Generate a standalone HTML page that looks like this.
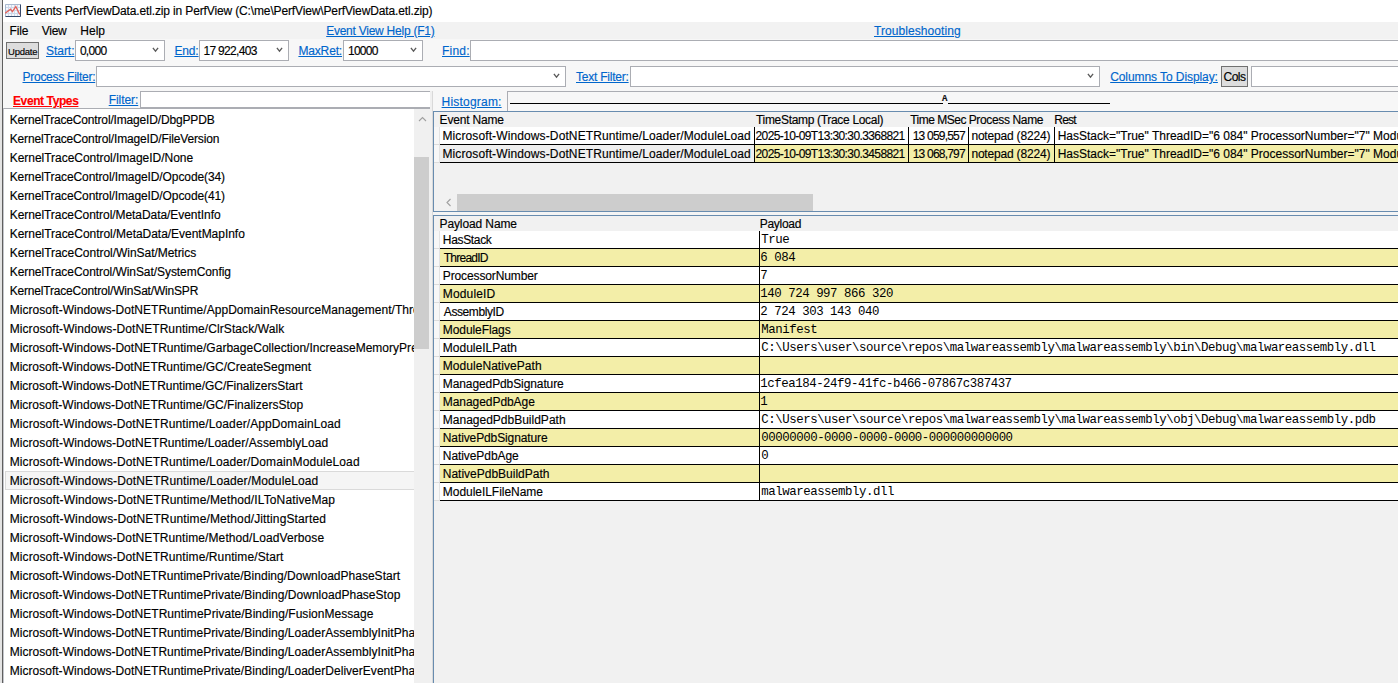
<!DOCTYPE html>
<html><head><meta charset="utf-8"><style>
html,body{margin:0;padding:0;}
body{width:1398px;height:683px;position:relative;overflow:hidden;background:#f7f7f7;font-family:'Liberation Sans', sans-serif;}
.t{position:absolute;white-space:nowrap;-webkit-text-stroke:0.15px currentColor;}
.r{position:absolute;box-sizing:border-box;}
</style></head><body>
<!-- window left edge -->
<div class="r" style="left:0;top:0;width:2px;height:683px;background:#e4e4e4"></div>
<div class="r" style="left:2px;top:0;width:1px;height:683px;background:#5f5f5f"></div>
<!-- title bar -->
<div class="r" style="left:3px;top:0;width:1395px;height:22px;background:#ffffff"></div>
<!-- icon -->
<svg class="r" style="left:5px;top:4px" width="16" height="13" viewBox="0 0 16 13">
 <rect x="0" y="0" width="16" height="13" fill="#f4f7fc"/>
 <g stroke="#cdd8ea" stroke-width="1"><line x1="1" y1="3.5" x2="15" y2="3.5"/><line x1="1" y1="6.5" x2="15" y2="6.5"/><line x1="1" y1="9.5" x2="15" y2="9.5"/><line x1="3.5" y1="1" x2="3.5" y2="12"/><line x1="6.5" y1="1" x2="6.5" y2="12"/><line x1="9.5" y1="1" x2="9.5" y2="12"/><line x1="12.5" y1="1" x2="12.5" y2="12"/></g>
 <path d="M0.5 0.5 H15.5" stroke="#a9b9cf" stroke-width="1"/>
 <path d="M0.5 0.5 V12.5" stroke="#a9b9cf" stroke-width="1"/>
 <path d="M15.5 0.5 V12.5 H0.5" fill="none" stroke="#34486a" stroke-width="1"/>
 <polyline points="0.2,9.2 5.5,5.2 7.4,7.6 10.8,2.6 14.8,10.5" fill="none" stroke="#e2625a" stroke-width="1.3"/>
</svg>
<!-- menu bar -->
<div class="r" style="left:3px;top:22px;width:1395px;height:17px;background:#f2f2f2"></div>
<!-- update button -->
<div class="r" style="left:6px;top:42px;width:33px;height:17px;background:#dddddd;border:1px solid #707070"></div>
<!-- combos row 2 -->
<div class="r" style="left:75px;top:40px;width:90px;height:21px;background:#fff;border:1px solid #abadb3"></div>
<div class="r" style="left:199px;top:40px;width:90px;height:21px;background:#fff;border:1px solid #abadb3"></div>
<div class="r" style="left:343px;top:40px;width:80px;height:21px;background:#fff;border:1px solid #abadb3"></div>
<div class="r" style="left:470px;top:40px;width:940px;height:21px;background:#fff;border:1px solid #abadb3"></div>
<!-- row 3 -->
<div class="r" style="left:96px;top:66px;width:470px;height:21px;background:#fff;border:1px solid #abadb3"></div>
<div class="r" style="left:630px;top:66px;width:470px;height:21px;background:#fff;border:1px solid #abadb3"></div>
<div class="r" style="left:1221px;top:66px;width:27px;height:21px;background:#dddddd;border:1px solid #707070"></div>
<div class="r" style="left:1251px;top:66px;width:160px;height:21px;background:#fff;border:1px solid #abadb3"></div>
<!-- chevrons -->
<svg class="r" style="left:0;top:0" width="1398" height="100">
 <g fill="none" stroke="#5a5a5a" stroke-width="1.3">
  <polyline points="152.9,47.8 155.5,51.2 158.1,47.8"/>
  <polyline points="276.9,47.8 279.5,51.2 282.1,47.8"/>
  <polyline points="410.9,47.8 413.5,51.2 416.1,47.8"/>
  <polyline points="553.9,73.8 556.5,77.2 559.1,73.8"/>
  <polyline points="1087.9,73.8 1090.5,77.2 1093.1,73.8"/>
 </g>
</svg>
<!-- row 4: filter textbox -->
<div class="r" style="left:140px;top:91px;width:290px;height:17px;background:#fff;border:1px solid #abadb3;border-bottom:none;border-right:none"></div>
<!-- histogram box -->
<div class="r" style="left:507px;top:91px;width:900px;height:20px;background:#f7f7f7;border:1px solid #abadb3;border-bottom:none"></div>
<div class="r" style="left:510px;top:103px;width:433px;height:1px;background:#000"></div>
<div class="r" style="left:948px;top:103px;width:162px;height:1px;background:#000"></div>
<div class="t" style="left:942px;top:95px;font:bold 9px 'Liberation Mono',monospace;line-height:9px;color:#111">A</div>
<!-- left list -->
<div class="r" style="left:3px;top:108px;width:427px;height:575px;background:#fff;border-top:1px solid #abadb3;border-left:1px solid #c4c6cc"></div>
<div class="r" style="left:140px;top:107px;width:290px;height:1px;background:#abadb3"></div>
<div class="r" style="left:414px;top:109px;width:16px;height:574px;background:#f0f0f0"></div>
<div class="r" style="left:414px;top:157px;width:15px;height:192px;background:#cdcdcd"></div>
<svg class="r" style="left:414px;top:112px" width="16" height="14"><polyline points="5,9 8.5,5.5 12,9" fill="none" stroke="#a0a0a0" stroke-width="1.1"/></svg>
<div class="r" style="left:5px;top:471px;width:409px;height:19px;background:#f5f5f5;border:1px solid #dadada;border-left:1px solid #dadada;border-right:none"></div>
<!-- splitter -->
<div class="r" style="left:430px;top:91px;width:3px;height:592px;background:#f0f0f0"></div>
<div class="r" style="left:432px;top:91px;width:1px;height:592px;background:#d9d9d9"></div>
<!-- right panel: events grid -->
<div class="r" style="left:433px;top:111px;width:965px;height:101px;background:#f1f1f1;border:1px solid #688caf;border-right:none"></div>
<div class="r" style="left:434px;top:127px;width:6px;height:36px;background:#f7f7f7;border-right:1px solid #e3e3e3"></div>
<div class="r" style="left:434px;top:144px;width:6px;height:1px;background:#dcdcdc"></div>
<div class="r" style="left:434px;top:162px;width:6px;height:1px;background:#dcdcdc"></div>
<div class="r" style="left:440px;top:127px;width:958px;height:17px;background:#ffffff"></div>
<div class="r" style="left:440px;top:145px;width:958px;height:17px;background:#f3eea8"></div>
<div class="r" style="left:440px;top:145px;width:314px;height:17px;background:#efefef"></div>
<div class="r" style="left:440px;top:144px;width:958px;height:1px;background:#000"></div>
<div class="r" style="left:440px;top:162px;width:958px;height:1px;background:#000"></div>
<div class="r" style="left:754px;top:127px;width:1px;height:35px;background:#000"></div>
<div class="r" style="left:908px;top:127px;width:1px;height:35px;background:#000"></div>
<div class="r" style="left:968px;top:127px;width:1px;height:35px;background:#000"></div>
<div class="r" style="left:1054px;top:127px;width:1px;height:35px;background:#000"></div>
<!-- h scrollbar -->
<div class="r" style="left:457px;top:194px;width:356px;height:17px;background:#cdcdcd"></div>
<svg class="r" style="left:440px;top:194px" width="17" height="17"><polyline points="10.5,5 7,8.5 10.5,12" fill="none" stroke="#a0a0a0" stroke-width="1.1"/></svg>
<div class="r" style="left:433px;top:212px;width:965px;height:3px;background:#f4f4f4"></div>
<!-- payload grid -->
<div class="r" style="left:433px;top:215px;width:965px;height:468px;background:#f1f1f1;border-top:1px solid #688caf;border-left:1px solid #688caf"></div>
<div class="r" style="left:434px;top:231px;width:6px;height:270px;background:#f7f7f7;border-right:1px solid #e3e3e3"></div>
<div class="r" style="left:440px;top:231px;width:958px;height:17px;background:#ffffff"></div>
<div class="r" style="left:440px;top:248px;width:958px;height:1px;background:#000"></div>
<div class="r" style="left:434px;top:248px;width:6px;height:1px;background:#dcdcdc"></div>
<div class="r" style="left:440px;top:249px;width:958px;height:17px;background:#f3eea8"></div>
<div class="r" style="left:440px;top:266px;width:958px;height:1px;background:#000"></div>
<div class="r" style="left:434px;top:266px;width:6px;height:1px;background:#dcdcdc"></div>
<div class="r" style="left:440px;top:267px;width:958px;height:17px;background:#ffffff"></div>
<div class="r" style="left:440px;top:284px;width:958px;height:1px;background:#000"></div>
<div class="r" style="left:434px;top:284px;width:6px;height:1px;background:#dcdcdc"></div>
<div class="r" style="left:440px;top:285px;width:958px;height:17px;background:#f3eea8"></div>
<div class="r" style="left:440px;top:302px;width:958px;height:1px;background:#000"></div>
<div class="r" style="left:434px;top:302px;width:6px;height:1px;background:#dcdcdc"></div>
<div class="r" style="left:440px;top:303px;width:958px;height:17px;background:#ffffff"></div>
<div class="r" style="left:440px;top:320px;width:958px;height:1px;background:#000"></div>
<div class="r" style="left:434px;top:320px;width:6px;height:1px;background:#dcdcdc"></div>
<div class="r" style="left:440px;top:321px;width:958px;height:17px;background:#f3eea8"></div>
<div class="r" style="left:440px;top:338px;width:958px;height:1px;background:#000"></div>
<div class="r" style="left:434px;top:338px;width:6px;height:1px;background:#dcdcdc"></div>
<div class="r" style="left:440px;top:339px;width:958px;height:17px;background:#ffffff"></div>
<div class="r" style="left:440px;top:356px;width:958px;height:1px;background:#000"></div>
<div class="r" style="left:434px;top:356px;width:6px;height:1px;background:#dcdcdc"></div>
<div class="r" style="left:440px;top:357px;width:958px;height:17px;background:#f3eea8"></div>
<div class="r" style="left:440px;top:374px;width:958px;height:1px;background:#000"></div>
<div class="r" style="left:434px;top:374px;width:6px;height:1px;background:#dcdcdc"></div>
<div class="r" style="left:440px;top:375px;width:958px;height:17px;background:#ffffff"></div>
<div class="r" style="left:440px;top:392px;width:958px;height:1px;background:#000"></div>
<div class="r" style="left:434px;top:392px;width:6px;height:1px;background:#dcdcdc"></div>
<div class="r" style="left:440px;top:393px;width:958px;height:17px;background:#f3eea8"></div>
<div class="r" style="left:440px;top:410px;width:958px;height:1px;background:#000"></div>
<div class="r" style="left:434px;top:410px;width:6px;height:1px;background:#dcdcdc"></div>
<div class="r" style="left:440px;top:411px;width:958px;height:17px;background:#ffffff"></div>
<div class="r" style="left:440px;top:428px;width:958px;height:1px;background:#000"></div>
<div class="r" style="left:434px;top:428px;width:6px;height:1px;background:#dcdcdc"></div>
<div class="r" style="left:440px;top:429px;width:958px;height:17px;background:#f3eea8"></div>
<div class="r" style="left:440px;top:446px;width:958px;height:1px;background:#000"></div>
<div class="r" style="left:434px;top:446px;width:6px;height:1px;background:#dcdcdc"></div>
<div class="r" style="left:440px;top:447px;width:958px;height:17px;background:#ffffff"></div>
<div class="r" style="left:440px;top:464px;width:958px;height:1px;background:#000"></div>
<div class="r" style="left:434px;top:464px;width:6px;height:1px;background:#dcdcdc"></div>
<div class="r" style="left:440px;top:465px;width:958px;height:17px;background:#f3eea8"></div>
<div class="r" style="left:440px;top:482px;width:958px;height:1px;background:#000"></div>
<div class="r" style="left:434px;top:482px;width:6px;height:1px;background:#dcdcdc"></div>
<div class="r" style="left:440px;top:483px;width:958px;height:17px;background:#ffffff"></div>
<div class="r" style="left:440px;top:500px;width:958px;height:1px;background:#000"></div>
<div class="r" style="left:434px;top:500px;width:6px;height:1px;background:#dcdcdc"></div>
<div class="r" style="left:759px;top:231px;width:1px;height:270px;background:#000"></div>

<div class="t" style="left:25.70px;top:4.00px;font:normal 12px 'Liberation Sans', sans-serif;line-height:14px;color:#000;letter-spacing:-0.137px;">Events PerfViewData.etl.zip in PerfView (C:\me\PerfView\PerfViewData.etl.zip)</div>
<div class="t" style="left:9.50px;top:24.00px;font:normal 12px 'Liberation Sans', sans-serif;line-height:14px;color:#000;letter-spacing:-0.167px;">File</div>
<div class="t" style="left:41.80px;top:24.00px;font:normal 12px 'Liberation Sans', sans-serif;line-height:14px;color:#000;letter-spacing:-0.267px;">View</div>
<div class="t" style="left:80.30px;top:24.00px;font:normal 12px 'Liberation Sans', sans-serif;line-height:14px;color:#000;">Help</div>
<div class="t" style="left:326.20px;top:24.00px;font:normal 12px 'Liberation Sans', sans-serif;line-height:14px;color:#0066cc;letter-spacing:-0.247px;text-decoration:underline;">Event View Help (F1)</div>
<div class="t" style="left:874.00px;top:24.00px;font:normal 12px 'Liberation Sans', sans-serif;line-height:14px;color:#0066cc;letter-spacing:0.071px;text-decoration:underline;">Troubleshooting</div>
<div class="t" style="left:8.00px;top:45.00px;font:normal 9.5px 'Liberation Sans', sans-serif;line-height:14px;color:#000;letter-spacing:-0.220px;">Update</div>
<div class="t" style="left:46.00px;top:44.00px;font:normal 12px 'Liberation Sans', sans-serif;line-height:14px;color:#0066cc;letter-spacing:-0.040px;text-decoration:underline;">Start:</div>
<div class="t" style="left:79.90px;top:44.00px;font:normal 12px 'Liberation Sans', sans-serif;line-height:14px;color:#000;letter-spacing:-0.700px;">0,000</div>
<div class="t" style="left:174.40px;top:44.00px;font:normal 12px 'Liberation Sans', sans-serif;line-height:14px;color:#0066cc;letter-spacing:-0.133px;text-decoration:underline;">End:</div>
<div class="t" style="left:203.40px;top:44.00px;font:normal 12px 'Liberation Sans', sans-serif;line-height:14px;color:#000;letter-spacing:-0.667px;">17 922,403</div>
<div class="t" style="left:298.40px;top:44.00px;font:normal 12px 'Liberation Sans', sans-serif;line-height:14px;color:#0066cc;letter-spacing:-0.150px;text-decoration:underline;">MaxRet:</div>
<div class="t" style="left:348.00px;top:44.00px;font:normal 12px 'Liberation Sans', sans-serif;line-height:14px;color:#000;letter-spacing:-0.750px;">10000</div>
<div class="t" style="left:442.00px;top:44.00px;font:normal 12px 'Liberation Sans', sans-serif;line-height:14px;color:#0066cc;letter-spacing:0.200px;text-decoration:underline;">Find:</div>
<div class="t" style="left:22.50px;top:70.00px;font:normal 12px 'Liberation Sans', sans-serif;line-height:14px;color:#0066cc;letter-spacing:-0.264px;text-decoration:underline;">Process Filter:</div>
<div class="t" style="left:576.00px;top:70.00px;font:normal 12px 'Liberation Sans', sans-serif;line-height:14px;color:#0066cc;letter-spacing:-0.227px;text-decoration:underline;">Text Filter:</div>
<div class="t" style="left:1110.20px;top:70.00px;font:normal 12px 'Liberation Sans', sans-serif;line-height:14px;color:#0066cc;letter-spacing:-0.078px;text-decoration:underline;">Columns To Display:</div>
<div class="t" style="left:1223.60px;top:70.00px;font:normal 12px 'Liberation Sans', sans-serif;line-height:14px;color:#000;letter-spacing:-0.567px;">Cols</div>
<div class="t" style="left:13.00px;top:94.00px;font:bold 12px 'Liberation Sans', sans-serif;line-height:14px;color:#ff0000;letter-spacing:-0.400px;text-decoration:underline;">Event Types</div>
<div class="t" style="left:108.70px;top:93.00px;font:normal 12px 'Liberation Sans', sans-serif;line-height:14px;color:#0066cc;letter-spacing:-0.067px;text-decoration:underline;">Filter:</div>
<div class="t" style="left:441.60px;top:95.00px;font:normal 12px 'Liberation Sans', sans-serif;line-height:14px;color:#0066cc;letter-spacing:0.200px;text-decoration:underline;">Histogram:</div>
<div class="t" style="left:9.70px;top:113.00px;font:normal 12px 'Liberation Sans', sans-serif;line-height:14px;color:#000;letter-spacing:-0.161px;width:404.30px;overflow:hidden;">KernelTraceControl/ImageID/DbgPPDB</div>
<div class="t" style="left:9.70px;top:132.00px;font:normal 12px 'Liberation Sans', sans-serif;line-height:14px;color:#000;letter-spacing:-0.141px;width:404.30px;overflow:hidden;">KernelTraceControl/ImageID/FileVersion</div>
<div class="t" style="left:9.70px;top:151.00px;font:normal 12px 'Liberation Sans', sans-serif;line-height:14px;color:#000;letter-spacing:-0.030px;width:404.30px;overflow:hidden;">KernelTraceControl/ImageID/None</div>
<div class="t" style="left:9.70px;top:170.00px;font:normal 12px 'Liberation Sans', sans-serif;line-height:14px;color:#000;letter-spacing:-0.100px;width:404.30px;overflow:hidden;">KernelTraceControl/ImageID/Opcode(34)</div>
<div class="t" style="left:9.70px;top:189.00px;font:normal 12px 'Liberation Sans', sans-serif;line-height:14px;color:#000;letter-spacing:-0.100px;width:404.30px;overflow:hidden;">KernelTraceControl/ImageID/Opcode(41)</div>
<div class="t" style="left:9.70px;top:208.00px;font:normal 12px 'Liberation Sans', sans-serif;line-height:14px;color:#000;letter-spacing:-0.058px;width:404.30px;overflow:hidden;">KernelTraceControl/MetaData/EventInfo</div>
<div class="t" style="left:9.70px;top:227.00px;font:normal 12px 'Liberation Sans', sans-serif;line-height:14px;color:#000;letter-spacing:-0.031px;width:404.30px;overflow:hidden;">KernelTraceControl/MetaData/EventMapInfo</div>
<div class="t" style="left:9.70px;top:246.00px;font:normal 12px 'Liberation Sans', sans-serif;line-height:14px;color:#000;letter-spacing:-0.034px;width:404.30px;overflow:hidden;">KernelTraceControl/WinSat/Metrics</div>
<div class="t" style="left:9.70px;top:265.00px;font:normal 12px 'Liberation Sans', sans-serif;line-height:14px;color:#000;letter-spacing:-0.062px;width:404.30px;overflow:hidden;">KernelTraceControl/WinSat/SystemConfig</div>
<div class="t" style="left:9.70px;top:284.00px;font:normal 12px 'Liberation Sans', sans-serif;line-height:14px;color:#000;letter-spacing:-0.181px;width:404.30px;overflow:hidden;">KernelTraceControl/WinSat/WinSPR</div>
<div class="t" style="left:9.70px;top:303.00px;font:normal 12px 'Liberation Sans', sans-serif;line-height:14px;color:#000;letter-spacing:0.030px;width:404.30px;overflow:hidden;">Microsoft-Windows-DotNETRuntime/AppDomainResourceManagement/ThreadCreated</div>
<div class="t" style="left:9.70px;top:322.00px;font:normal 12px 'Liberation Sans', sans-serif;line-height:14px;color:#000;letter-spacing:0.080px;width:404.30px;overflow:hidden;">Microsoft-Windows-DotNETRuntime/ClrStack/Walk</div>
<div class="t" style="left:9.70px;top:341.00px;font:normal 12px 'Liberation Sans', sans-serif;line-height:14px;color:#000;letter-spacing:0.020px;width:404.30px;overflow:hidden;">Microsoft-Windows-DotNETRuntime/GarbageCollection/IncreaseMemoryPressure</div>
<div class="t" style="left:9.70px;top:360.00px;font:normal 12px 'Liberation Sans', sans-serif;line-height:14px;color:#000;width:404.30px;overflow:hidden;">Microsoft-Windows-DotNETRuntime/GC/CreateSegment</div>
<div class="t" style="left:9.70px;top:379.00px;font:normal 12px 'Liberation Sans', sans-serif;line-height:14px;color:#000;letter-spacing:-0.024px;width:404.30px;overflow:hidden;">Microsoft-Windows-DotNETRuntime/GC/FinalizersStart</div>
<div class="t" style="left:9.70px;top:398.00px;font:normal 12px 'Liberation Sans', sans-serif;line-height:14px;color:#000;width:404.30px;overflow:hidden;">Microsoft-Windows-DotNETRuntime/GC/FinalizersStop</div>
<div class="t" style="left:9.70px;top:417.00px;font:normal 12px 'Liberation Sans', sans-serif;line-height:14px;color:#000;letter-spacing:0.096px;width:404.30px;overflow:hidden;">Microsoft-Windows-DotNETRuntime/Loader/AppDomainLoad</div>
<div class="t" style="left:9.70px;top:436.00px;font:normal 12px 'Liberation Sans', sans-serif;line-height:14px;color:#000;letter-spacing:0.060px;width:404.30px;overflow:hidden;">Microsoft-Windows-DotNETRuntime/Loader/AssemblyLoad</div>
<div class="t" style="left:9.70px;top:455.00px;font:normal 12px 'Liberation Sans', sans-serif;line-height:14px;color:#000;letter-spacing:0.106px;width:404.30px;overflow:hidden;">Microsoft-Windows-DotNETRuntime/Loader/DomainModuleLoad</div>
<div class="t" style="left:9.70px;top:474.00px;font:normal 12px 'Liberation Sans', sans-serif;line-height:14px;color:#000;letter-spacing:0.121px;width:404.30px;overflow:hidden;">Microsoft-Windows-DotNETRuntime/Loader/ModuleLoad</div>
<div class="t" style="left:9.70px;top:493.00px;font:normal 12px 'Liberation Sans', sans-serif;line-height:14px;color:#000;letter-spacing:0.133px;width:404.30px;overflow:hidden;">Microsoft-Windows-DotNETRuntime/Method/ILToNativeMap</div>
<div class="t" style="left:9.70px;top:512.00px;font:normal 12px 'Liberation Sans', sans-serif;line-height:14px;color:#000;letter-spacing:0.131px;width:404.30px;overflow:hidden;">Microsoft-Windows-DotNETRuntime/Method/JittingStarted</div>
<div class="t" style="left:9.70px;top:531.00px;font:normal 12px 'Liberation Sans', sans-serif;line-height:14px;color:#000;letter-spacing:0.088px;width:404.30px;overflow:hidden;">Microsoft-Windows-DotNETRuntime/Method/LoadVerbose</div>
<div class="t" style="left:9.70px;top:550.00px;font:normal 12px 'Liberation Sans', sans-serif;line-height:14px;color:#000;letter-spacing:0.098px;width:404.30px;overflow:hidden;">Microsoft-Windows-DotNETRuntime/Runtime/Start</div>
<div class="t" style="left:9.70px;top:569.00px;font:normal 12px 'Liberation Sans', sans-serif;line-height:14px;color:#000;letter-spacing:0.013px;width:404.30px;overflow:hidden;">Microsoft-Windows-DotNETRuntimePrivate/Binding/DownloadPhaseStart</div>
<div class="t" style="left:9.70px;top:588.00px;font:normal 12px 'Liberation Sans', sans-serif;line-height:14px;color:#000;letter-spacing:0.029px;width:404.30px;overflow:hidden;">Microsoft-Windows-DotNETRuntimePrivate/Binding/DownloadPhaseStop</div>
<div class="t" style="left:9.70px;top:607.00px;font:normal 12px 'Liberation Sans', sans-serif;line-height:14px;color:#000;letter-spacing:0.039px;width:404.30px;overflow:hidden;">Microsoft-Windows-DotNETRuntimePrivate/Binding/FusionMessage</div>
<div class="t" style="left:9.70px;top:626.00px;font:normal 12px 'Liberation Sans', sans-serif;line-height:14px;color:#000;letter-spacing:0.028px;width:404.30px;overflow:hidden;">Microsoft-Windows-DotNETRuntimePrivate/Binding/LoaderAssemblyInitPhaseStart</div>
<div class="t" style="left:9.70px;top:645.00px;font:normal 12px 'Liberation Sans', sans-serif;line-height:14px;color:#000;letter-spacing:0.028px;width:404.30px;overflow:hidden;">Microsoft-Windows-DotNETRuntimePrivate/Binding/LoaderAssemblyInitPhaseEnd</div>
<div class="t" style="left:9.70px;top:664.00px;font:normal 12px 'Liberation Sans', sans-serif;line-height:14px;color:#000;letter-spacing:0.028px;width:404.30px;overflow:hidden;">Microsoft-Windows-DotNETRuntimePrivate/Binding/LoaderDeliverEventPhaseStart</div>
<div class="t" style="left:9.70px;top:683.00px;font:normal 12px 'Liberation Sans', sans-serif;line-height:14px;color:#000;width:404.30px;overflow:hidden;">Microsoft-Windows-DotNETRuntimePrivate/Binding/LoaderDeliverEventsPhaseEnd</div>
<div class="t" style="left:439.60px;top:113.00px;font:normal 12px 'Liberation Sans', sans-serif;line-height:14px;color:#000;letter-spacing:-0.178px;">Event Name</div>
<div class="t" style="left:756.00px;top:113.00px;font:normal 12px 'Liberation Sans', sans-serif;line-height:14px;color:#000;letter-spacing:-0.318px;">TimeStamp (Trace Local)</div>
<div class="t" style="left:910.20px;top:113.00px;font:normal 12px 'Liberation Sans', sans-serif;line-height:14px;color:#000;letter-spacing:-0.488px;">Time MSec</div>
<div class="t" style="left:968.70px;top:113.00px;font:normal 12px 'Liberation Sans', sans-serif;line-height:14px;color:#000;letter-spacing:-0.355px;">Process Name</div>
<div class="t" style="left:1054.30px;top:113.00px;font:normal 12px 'Liberation Sans', sans-serif;line-height:14px;color:#000;letter-spacing:-0.767px;">Rest</div>
<div class="t" style="left:442.40px;top:129.00px;font:normal 12px 'Liberation Sans', sans-serif;line-height:14px;color:#000;letter-spacing:0.117px;">Microsoft-Windows-DotNETRuntime/Loader/ModuleLoad</div>
<div class="t" style="left:755.50px;top:129.00px;font:normal 12px 'Liberation Sans', sans-serif;line-height:14px;color:#000;letter-spacing:-0.604px;">2025-10-09T13:30:30.3368821</div>
<div class="t" style="left:912.70px;top:129.00px;font:normal 12px 'Liberation Sans', sans-serif;line-height:14px;color:#000;letter-spacing:-0.789px;">13 059,557</div>
<div class="t" style="left:971.40px;top:129.00px;font:normal 12px 'Liberation Sans', sans-serif;line-height:14px;color:#000;letter-spacing:-0.185px;">notepad (8224)</div>
<div class="t" style="left:1057.70px;top:129.00px;font:normal 12px 'Liberation Sans', sans-serif;line-height:14px;color:#000;width:340.30px;overflow:hidden;">HasStack=&quot;True&quot; ThreadID=&quot;6 084&quot; ProcessorNumber=&quot;7&quot; ModuleID=&quot;140 724 997 866 320&quot; AssemblyID=&quot;2 724 303 143 040&quot;</div>
<div class="t" style="left:442.40px;top:147.00px;font:normal 12px 'Liberation Sans', sans-serif;line-height:14px;color:#000;letter-spacing:0.117px;">Microsoft-Windows-DotNETRuntime/Loader/ModuleLoad</div>
<div class="t" style="left:755.50px;top:147.00px;font:normal 12px 'Liberation Sans', sans-serif;line-height:14px;color:#000;letter-spacing:-0.604px;">2025-10-09T13:30:30.3458821</div>
<div class="t" style="left:912.70px;top:147.00px;font:normal 12px 'Liberation Sans', sans-serif;line-height:14px;color:#000;letter-spacing:-0.789px;">13 068,797</div>
<div class="t" style="left:971.40px;top:147.00px;font:normal 12px 'Liberation Sans', sans-serif;line-height:14px;color:#000;letter-spacing:-0.185px;">notepad (8224)</div>
<div class="t" style="left:1057.70px;top:147.00px;font:normal 12px 'Liberation Sans', sans-serif;line-height:14px;color:#000;width:340.30px;overflow:hidden;">HasStack=&quot;True&quot; ThreadID=&quot;6 084&quot; ProcessorNumber=&quot;7&quot; ModuleID=&quot;140 724 997 866 320&quot; AssemblyID=&quot;2 724 303 143 040&quot;</div>
<div class="t" style="left:439.50px;top:217.00px;font:normal 12px 'Liberation Sans', sans-serif;line-height:14px;color:#000;letter-spacing:-0.109px;">Payload Name</div>
<div class="t" style="left:759.70px;top:217.00px;font:normal 12px 'Liberation Sans', sans-serif;line-height:14px;color:#000;letter-spacing:-0.283px;">Payload</div>
<div class="t" style="left:442.80px;top:233.00px;font:normal 12px 'Liberation Sans', sans-serif;line-height:14px;color:#000;letter-spacing:-0.329px;">HasStack</div>
<div class="t" style="left:761.30px;top:233.00px;font:normal 12.4px 'Liberation Mono', monospace;line-height:14px;color:#000;letter-spacing:-0.455px;-webkit-text-stroke:0;">True</div>
<div class="t" style="left:443.80px;top:251.00px;font:normal 12px 'Liberation Sans', sans-serif;line-height:14px;color:#000;letter-spacing:-0.757px;">ThreadID</div>
<div class="t" style="left:760.30px;top:251.00px;font:normal 12.4px 'Liberation Mono', monospace;line-height:14px;color:#000;letter-spacing:-0.455px;-webkit-text-stroke:0;">6 084</div>
<div class="t" style="left:442.80px;top:269.00px;font:normal 12px 'Liberation Sans', sans-serif;line-height:14px;color:#000;letter-spacing:-0.121px;">ProcessorNumber</div>
<div class="t" style="left:760.30px;top:269.00px;font:normal 12.4px 'Liberation Mono', monospace;line-height:14px;color:#000;letter-spacing:-0.455px;-webkit-text-stroke:0;">7</div>
<div class="t" style="left:442.80px;top:287.00px;font:normal 12px 'Liberation Sans', sans-serif;line-height:14px;color:#000;letter-spacing:0.143px;">ModuleID</div>
<div class="t" style="left:760.30px;top:287.00px;font:normal 12.4px 'Liberation Mono', monospace;line-height:14px;color:#000;letter-spacing:-0.455px;-webkit-text-stroke:0;">140 724 997 866 320</div>
<div class="t" style="left:443.80px;top:305.00px;font:normal 12px 'Liberation Sans', sans-serif;line-height:14px;color:#000;letter-spacing:-0.400px;">AssemblyID</div>
<div class="t" style="left:760.30px;top:305.00px;font:normal 12.4px 'Liberation Mono', monospace;line-height:14px;color:#000;letter-spacing:-0.455px;-webkit-text-stroke:0;">2 724 303 143 040</div>
<div class="t" style="left:442.80px;top:323.00px;font:normal 12px 'Liberation Sans', sans-serif;line-height:14px;color:#000;letter-spacing:-0.080px;">ModuleFlags</div>
<div class="t" style="left:761.30px;top:323.00px;font:normal 12.4px 'Liberation Mono', monospace;line-height:14px;color:#000;letter-spacing:-0.455px;-webkit-text-stroke:0;">Manifest</div>
<div class="t" style="left:442.80px;top:341.00px;font:normal 12px 'Liberation Sans', sans-serif;line-height:14px;color:#000;letter-spacing:0.009px;">ModuleILPath</div>
<div class="t" style="left:761.30px;top:341.00px;font:normal 12.4px 'Liberation Mono', monospace;line-height:14px;color:#000;letter-spacing:-0.455px;-webkit-text-stroke:0;">C:\Users\user\source\repos\malwareassembly\malwareassembly\bin\Debug\malwareassembly.dll</div>
<div class="t" style="left:442.80px;top:359.00px;font:normal 12px 'Liberation Sans', sans-serif;line-height:14px;color:#000;letter-spacing:0.047px;">ModuleNativePath</div>
<div class="t" style="left:442.80px;top:377.00px;font:normal 12px 'Liberation Sans', sans-serif;line-height:14px;color:#000;letter-spacing:-0.100px;">ManagedPdbSignature</div>
<div class="t" style="left:760.30px;top:377.00px;font:normal 12.4px 'Liberation Mono', monospace;line-height:14px;color:#000;letter-spacing:-0.455px;-webkit-text-stroke:0;">1cfea184-24f9-41fc-b466-07867c387437</div>
<div class="t" style="left:442.80px;top:395.00px;font:normal 12px 'Liberation Sans', sans-serif;line-height:14px;color:#000;letter-spacing:-0.058px;">ManagedPdbAge</div>
<div class="t" style="left:760.30px;top:395.00px;font:normal 12.4px 'Liberation Mono', monospace;line-height:14px;color:#000;letter-spacing:-0.455px;-webkit-text-stroke:0;">1</div>
<div class="t" style="left:442.80px;top:413.00px;font:normal 12px 'Liberation Sans', sans-serif;line-height:14px;color:#000;">ManagedPdbBuildPath</div>
<div class="t" style="left:761.30px;top:413.00px;font:normal 12.4px 'Liberation Mono', monospace;line-height:14px;color:#000;letter-spacing:-0.455px;-webkit-text-stroke:0;">C:\Users\user\source\repos\malwareassembly\malwareassembly\obj\Debug\malwareassembly.pdb</div>
<div class="t" style="left:442.80px;top:431.00px;font:normal 12px 'Liberation Sans', sans-serif;line-height:14px;color:#000;letter-spacing:-0.112px;">NativePdbSignature</div>
<div class="t" style="left:761.30px;top:431.00px;font:normal 12.4px 'Liberation Mono', monospace;line-height:14px;color:#000;letter-spacing:-0.455px;-webkit-text-stroke:0;">00000000-0000-0000-0000-000000000000</div>
<div class="t" style="left:442.80px;top:449.00px;font:normal 12px 'Liberation Sans', sans-serif;line-height:14px;color:#000;letter-spacing:-0.073px;">NativePdbAge</div>
<div class="t" style="left:761.30px;top:449.00px;font:normal 12.4px 'Liberation Mono', monospace;line-height:14px;color:#000;letter-spacing:-0.455px;-webkit-text-stroke:0;">0</div>
<div class="t" style="left:442.80px;top:467.00px;font:normal 12px 'Liberation Sans', sans-serif;line-height:14px;color:#000;letter-spacing:-0.006px;">NativePdbBuildPath</div>
<div class="t" style="left:442.80px;top:485.00px;font:normal 12px 'Liberation Sans', sans-serif;line-height:14px;color:#000;letter-spacing:-0.040px;">ModuleILFileName</div>
<div class="t" style="left:761.30px;top:485.00px;font:normal 12.4px 'Liberation Mono', monospace;line-height:14px;color:#000;letter-spacing:-0.455px;-webkit-text-stroke:0;">malwareassembly.dll</div>
</body></html>
